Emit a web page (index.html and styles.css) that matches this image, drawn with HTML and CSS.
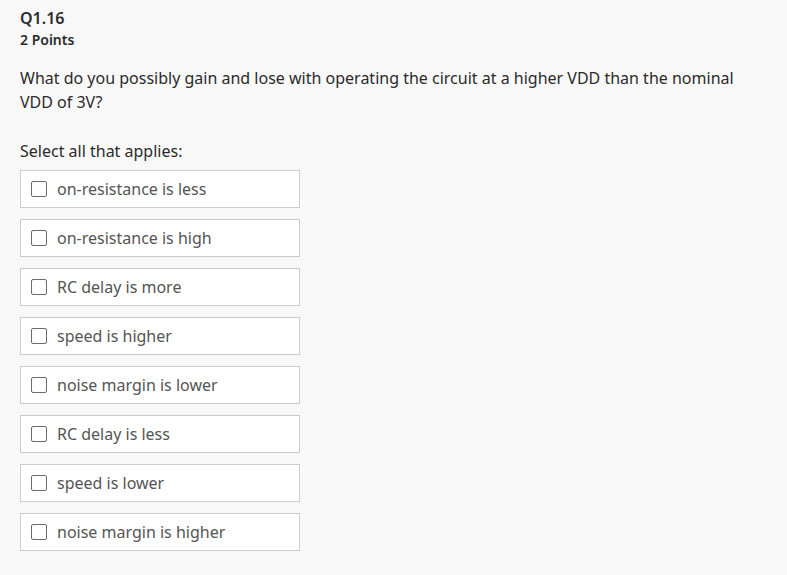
FILE: index.html
```html
<!DOCTYPE html>
<html>
<head>
<meta charset="utf-8">
<link rel="stylesheet" href="styles.css">
</head>
<body>
<div class="question">
  <div class="q-title">Q1.16</div>
  <div class="q-points">2 Points</div>
  <p class="q-text">What do you possibly gain and lose with operating the circuit at a higher VDD than the nominal VDD of 3V?</p>
  <p class="q-instr">Select all that applies:</p>
  <div class="options">
    <label class="option"><span class="box"></span><span class="label">on-resistance is less</span></label>
    <label class="option"><span class="box"></span><span class="label">on-resistance is high</span></label>
    <label class="option"><span class="box"></span><span class="label">RC delay is more</span></label>
    <label class="option"><span class="box"></span><span class="label">speed is higher</span></label>
    <label class="option"><span class="box"></span><span class="label">noise margin is lower</span></label>
    <label class="option"><span class="box"></span><span class="label">RC delay is less</span></label>
    <label class="option"><span class="box"></span><span class="label">speed is lower</span></label>
    <label class="option"><span class="box"></span><span class="label">noise margin is higher</span></label>
  </div>
</div>
</body>
</html>
```
FILE: styles.css
```css
html, body {
  margin: 0;
  padding: 0;
  background: #f8f8f8;
}
body {
  font-family: "Noto Sans", "Open Sans", sans-serif;
  color: #2b2b2b;
}
.question {
  padding: 7px 20px 0 20px;
  width: 747px;
}
.q-title {
  font-size: 16px;
  font-weight: 600;
  line-height: 22px;
}
.q-points {
  font-size: 14px;
  font-weight: 600;
  line-height: 22px;
}
.q-text {
  font-size: 16px;
  line-height: 24px;
  margin: 15px 0 0 0;
}
.q-instr {
  font-size: 16px;
  line-height: 24px;
  margin: 25px 0 0 0;
}
.options {
  display: flex;
  flex-direction: column;
  gap: 11px;
  margin-top: 7px;
}
.option {
  display: flex;
  align-items: center;
  width: 268px;
  height: 36px;
  background: #fff;
  border: 1px solid #cccccc;
  padding: 0 0 0 10px;
  box-sizing: content-box;
}
.box {
  width: 14px;
  height: 14px;
  border: 1px solid #6b6b6b;
  border-radius: 2px;
  background: #fff;
  flex: none;
}
.label {
  margin-left: 10px;
  font-size: 16px;
  color: #555;
}
```
